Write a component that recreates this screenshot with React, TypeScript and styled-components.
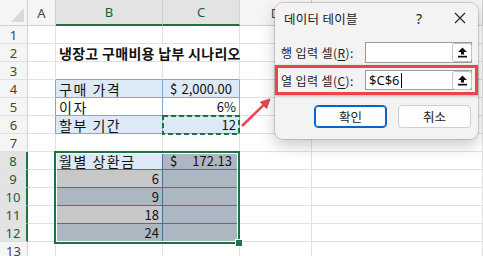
import React from "react";
import styled, { createGlobalStyle } from "styled-components";

const GRID = "#e1e1e1";
const HDR_LINE = "#d0d0d0";
const GREEN = "#1f7244";
const BLUE = "#7ea8db";
const SLATE = "#50709a";
const LIGHT_BLUE = "#dce9f6";
const SEL_GRAY = "#c8c8c8";
const SEL_SLATE = "#adb7c2";

const GlobalStyle = createGlobalStyle`
  html, body { margin: 0; padding: 0; background: #fff; overflow: hidden; }
  body { font-family: "Noto Sans CJK KR", "Noto Sans", sans-serif; }
`;

const Stage = styled.div`
  position: relative;
  width: 483px;
  height: 256px;
  overflow: hidden;
  background: #fff;
`;

const Sheet = styled.div`
  display: grid;
  grid-template-columns: 28px 28px 107px 77px 72px 1fr;
  grid-template-rows: 26px repeat(13, 18px);
`;

const Corner = styled.div`
  box-sizing: border-box;
  background: #f5f5f5;
  border-right: 1px solid ${HDR_LINE};
  border-bottom: 1px solid ${HDR_LINE};
  display: flex;
  align-items: flex-end;
  justify-content: flex-end;
  padding: 0 3px 3px 0;
`;

const ColHeader = styled.div<{ $sel?: boolean }>`
  box-sizing: border-box;
  background: ${(p) => (p.$sel ? "#e3e3e3" : "#f5f5f5")};
  border-right: 1px solid ${HDR_LINE};
  border-bottom: ${(p) => (p.$sel ? `2px solid ${GREEN}` : `1px solid ${HDR_LINE}`)};
  display: flex;
  align-items: center;
  justify-content: center;
  font-family: "Noto Sans", sans-serif;
  font-size: 13px;
  color: ${(p) => (p.$sel ? "#1b5e3a" : "#444")};
`;

const RowHeader = styled.div<{ $sel?: boolean }>`
  box-sizing: border-box;
  background: ${(p) => (p.$sel ? "#e3e3e3" : "#f5f5f5")};
  border-right: ${(p) => (p.$sel ? `2px solid ${GREEN}` : `1px solid ${HDR_LINE}`)};
  border-bottom: 1px solid ${GRID};
  display: flex;
  align-items: center;
  justify-content: center;
  font-family: "Noto Sans", sans-serif;
  font-size: 13px;
  color: ${(p) => (p.$sel ? "#1b5e3a" : "#444")};
`;

type Align = "left" | "right" | "acct";

const Cell = styled.div<{
  $bg?: string;
  $br?: string;
  $bb?: string;
  $align?: Align;
  $bold?: boolean;
  $span?: number;
}>`
  box-sizing: border-box;
  grid-column: span ${(p) => p.$span ?? 1};
  background: ${(p) => p.$bg ?? "#fff"};
  border-right: 1px solid ${(p) => p.$br ?? GRID};
  border-bottom: 1px solid ${(p) => p.$bb ?? GRID};
  display: flex;
  align-items: center;
  justify-content: ${(p) =>
    p.$align === "right" ? "flex-end" : p.$align === "acct" ? "space-between" : "flex-start"};
  padding: ${(p) => (p.$align === "acct" ? "0 7px" : "0 3px")};
  font-size: ${(p) => (p.$align ? "13px" : "14px")};
  font-weight: ${(p) => (p.$bold ? 700 : 400)};
  letter-spacing: ${(p) => (p.$bold ? "0.3px" : p.$align ? "0" : "1.5px")};
  white-space: nowrap;
  overflow: visible;
  color: #111;
  line-height: 16px;
`;

type Spec = {
  text?: string;
  acct?: [string, string];
  bg?: string;
  br?: string;
  bb?: string;
  align?: Align;
  bold?: boolean;
  span?: number;
};

const E: Spec = {};

const rows: Spec[][] = [
  [E, E, E, E, E],
  [E, { text: "냉장고 구매비용 납부 시나리오", bold: true, span: 2 }, E, E],
  [E, { bb: BLUE }, { bb: BLUE }, E, E],
  [
    { br: BLUE },
    { text: "구매 가격", bg: LIGHT_BLUE, br: BLUE, bb: BLUE },
    { acct: ["$", "2,000.00"], align: "acct", bg: LIGHT_BLUE, br: BLUE, bb: BLUE },
    E,
    E,
  ],
  [
    { br: BLUE },
    { text: "이자", br: BLUE, bb: BLUE },
    { text: "6%", align: "right", br: BLUE, bb: BLUE },
    E,
    E,
  ],
  [
    { br: BLUE },
    { text: "할부 기간", bg: LIGHT_BLUE, br: BLUE, bb: BLUE },
    { text: "12", align: "right", bg: LIGHT_BLUE, br: BLUE, bb: BLUE },
    E,
    E,
  ],
  [E, { bb: SLATE }, { bb: SLATE }, E, E],
  [
    { br: SLATE },
    { text: "월별 상환금", bg: LIGHT_BLUE, br: SLATE, bb: SLATE },
    { acct: ["$", "172.13"], align: "acct", bg: SEL_SLATE, br: SLATE, bb: SLATE },
    E,
    E,
  ],
  [
    { br: SLATE },
    { text: "6", align: "right", bg: SEL_GRAY, br: SLATE, bb: SLATE },
    { bg: SEL_SLATE, br: SLATE, bb: SLATE },
    E,
    E,
  ],
  [
    { br: SLATE },
    { text: "9", align: "right", bg: SEL_SLATE, br: SLATE, bb: SLATE },
    { bg: SEL_SLATE, br: SLATE, bb: SLATE },
    E,
    E,
  ],
  [
    { br: SLATE },
    { text: "18", align: "right", bg: SEL_GRAY, br: SLATE, bb: SLATE },
    { bg: SEL_SLATE, br: SLATE, bb: SLATE },
    E,
    E,
  ],
  [
    { br: SLATE },
    { text: "24", align: "right", bg: SEL_SLATE, br: SLATE, bb: SLATE },
    { bg: SEL_SLATE, br: SLATE, bb: SLATE },
    E,
    E,
  ],
  [E, E, E, E, E],
];

const columns = [
  { name: "A", sel: false },
  { name: "B", sel: true },
  { name: "C", sel: true },
  { name: "D", sel: false },
  { name: "", sel: false },
];

/* overlays */
const Selection = styled.div`
  position: absolute;
  left: 54px;
  top: 151px;
  width: 186px;
  height: 93px;
  box-sizing: border-box;
  border: 2px solid ${GREEN};
  box-shadow: inset 0 0 0 1px #fff;
  pointer-events: none;
`;

const FillHandle = styled.div`
  position: absolute;
  left: 236px;
  top: 240px;
  width: 6px;
  height: 6px;
  background: ${GREEN};
  box-shadow: 0 0 0 1px #fff;
`;

const Overlay = styled.svg`
  position: absolute;
  left: 0;
  top: 0;
  pointer-events: none;
`;

/* dialog */
const Dialog = styled.div`
  position: absolute;
  left: 275px;
  top: 3px;
  width: 203px;
  height: 136px;
  box-sizing: border-box;
  background: #f3f3f3;
  border-radius: 8px;
  box-shadow: 0 0 0 1px rgba(0, 0, 0, 0.14), 0 6px 16px rgba(0, 0, 0, 0.22);
  display: flex;
  flex-direction: column;
  font-family: "Noto Sans CJK KR", sans-serif;
  font-size: 12px;
  color: #1b1b1b;
`;

const TitleBar = styled.div`
  height: 30px;
  display: flex;
  align-items: center;
  padding-left: 9px;
  padding-right: 6px;
`;

const Title = styled.div`
  flex: 1;
  font-size: 12.5px;
  letter-spacing: 0.3px;
`;

const TitleButton = styled.div<{ $w: number; $gap?: number }>`
  width: ${(p) => p.$w}px;
  height: 24px;
  margin-left: ${(p) => p.$gap ?? 0}px;
  display: flex;
  align-items: center;
  justify-content: center;
  font-family: "Noto Sans", sans-serif;
  font-size: 14px;
  color: #222;
`;

const FieldRow = styled.div<{ $hl?: boolean }>`
  display: flex;
  align-items: center;
  box-sizing: border-box;
  margin-top: ${(p) => (p.$hl ? "2px" : "9px")};
  height: ${(p) => (p.$hl ? "30px" : "21px")};
  padding: ${(p) => (p.$hl ? "0 3px" : "0 6px")};
  border: ${(p) => (p.$hl ? "3px solid #ec4548" : "none")};
  box-shadow: ${(p) => (p.$hl ? "0 1px 3px rgba(0,0,0,0.25)" : "none")};
`;

const Label = styled.div`
  width: 84px;
  white-space: nowrap;
  letter-spacing: 0.4px;
`;

const Key = styled.span`
  text-decoration: underline;
  text-underline-offset: 2px;
`;

const Input = styled.div<{ $h: number }>`
  width: 107px;
  height: ${(p) => p.$h}px;
  box-sizing: border-box;
  background: #fff;
  border: 1px solid #9a9a9a;
  display: flex;
  align-items: center;
  padding-left: 3px;
`;

const InputText = styled.div`
  flex: 1;
  display: flex;
  align-items: center;
  font-family: "Noto Sans", sans-serif;
  font-size: 13px;
  color: #111;
`;

const Caret = styled.span`
  display: inline-block;
  width: 1px;
  height: 15px;
  background: #000;
  margin-left: 1px;
`;

const PickButton = styled.div`
  width: 20px;
  height: 19px;
  box-sizing: border-box;
  background: #fff;
  border: 1px solid #c4c4c4;
  border-radius: 3px;
  display: flex;
  align-items: center;
  justify-content: center;
  margin-right: -1px;
`;

const ButtonRow = styled.div`
  margin-top: 10px;
  display: flex;
  justify-content: flex-end;
  gap: 11px;
  padding-right: 7px;
`;

const Button = styled.div<{ $primary?: boolean }>`
  width: 73px;
  height: 23px;
  box-sizing: border-box;
  background: #fdfdfd;
  border: 1px solid ${(p) => (p.$primary ? "#0a64c2" : "#cfcfcf")};
  box-shadow: ${(p) => (p.$primary ? "inset 0 0 0 1px #0a64c2" : "none")};
  border-radius: 4px;
  display: flex;
  align-items: center;
  justify-content: center;
  font-size: 12.5px;
  color: #1b1b1b;
`;

const UploadIcon = () => (
  <svg width="11" height="11" viewBox="0 0 11 11">
    <path d="M5.5 0.5 L10 5 L7 5 L7 7.6 L4 7.6 L4 5 L1 5 Z" fill="#111" />
    <rect x="1" y="8.8" width="9" height="1.7" fill="#111" />
  </svg>
);

const CloseIcon = () => (
  <svg width="12" height="12" viewBox="0 0 12 12">
    <path d="M1 1 L11 11 M11 1 L1 11" stroke="#222" strokeWidth="1.1" fill="none" />
  </svg>
);

export default function App() {
  return (
    <Stage>
      <GlobalStyle />
      <Sheet>
        <Corner>
          <svg width="13" height="14" viewBox="0 0 13 14">
            <path d="M13 0 L13 14 L0 14 Z" fill="#d9d9d9" />
          </svg>
        </Corner>
        {columns.map((c, i) => (
          <ColHeader key={i} $sel={c.sel}>
            {c.name}
          </ColHeader>
        ))}
        {rows.map((r, ri) => (
          <React.Fragment key={ri}>
            <RowHeader $sel={ri + 1 >= 8 && ri + 1 <= 12}>{ri + 1}</RowHeader>
            {r.map((s, ci) => (
              <Cell
                key={ci}
                $bg={s.bg}
                $br={s.br}
                $bb={s.bb}
                $align={s.align}
                $bold={s.bold}
                $span={s.span}
              >
                {s.acct ? (
                  <>
                    <span>{s.acct[0]}</span>
                    <span>{s.acct[1]}</span>
                  </>
                ) : (
                  s.text
                )}
              </Cell>
            ))}
          </React.Fragment>
        ))}
      </Sheet>

      <Selection />
      <FillHandle />

      <Overlay width="483" height="256" viewBox="0 0 483 256">
        <rect
          x="163"
          y="116"
          width="76"
          height="18"
          fill="none"
          stroke={GREEN}
          strokeWidth="2"
          strokeDasharray="5 3"
        />
        <line x1="242" y1="126" x2="263.5" y2="105.2" stroke="#e5474b" strokeWidth="2.5" />
        <path d="M270 99 L266.6 108.4 L260.4 102 Z" fill="#e5474b" stroke="#e5474b" strokeWidth="1" />
      </Overlay>

      <Dialog>
        <TitleBar>
          <Title>데이터 테이블</Title>
          <TitleButton $w={20}>?</TitleButton>
          <TitleButton $w={24} $gap={19}>
            <CloseIcon />
          </TitleButton>
        </TitleBar>
        <FieldRow>
          <Label>
            행 입력 셀(<Key>R</Key>):
          </Label>
          <Input $h={21}>
            <InputText />
            <PickButton>
              <UploadIcon />
            </PickButton>
          </Input>
        </FieldRow>
        <FieldRow $hl>
          <Label>
            열 입력 셀(<Key>C</Key>):
          </Label>
          <Input $h={20}>
            <InputText>
              $C$6
              <Caret />
            </InputText>
            <PickButton>
              <UploadIcon />
            </PickButton>
          </Input>
        </FieldRow>
        <ButtonRow>
          <Button $primary>확인</Button>
          <Button>취소</Button>
        </ButtonRow>
      </Dialog>
    </Stage>
  );
}
